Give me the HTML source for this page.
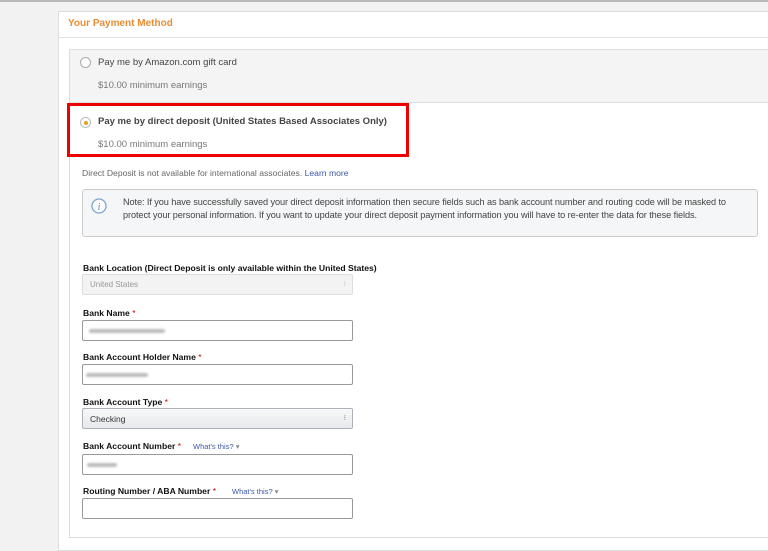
<!DOCTYPE html>
<html><head><style>
*{box-sizing:border-box;margin:0;padding:0}
body{width:768px;height:542px;background:#f2f2f2;font-family:"Liberation Sans",Arial,sans-serif;position:relative;overflow:hidden;color:#333}
.top{position:absolute;left:0;top:0;width:768px;height:2px;background:#bbb}
.panel{position:absolute;left:58px;top:11px;width:712px;height:540px;background:#fff;border:1px solid #ddd}
.hdr{position:absolute;left:68px;top:18px;font-size:10px;color:#e47911;font-weight:bold;opacity:.85}
.hline{position:absolute;left:58px;top:37px;width:710px;height:1px;background:#e3e3e3}
.inner{position:absolute;left:69px;top:49px;width:700px;height:489px;border:1px solid #ddd;background:#fff}
.gift{position:absolute;left:69px;top:49px;width:700px;height:54px;background:#f4f4f4;border:1px solid #ddd}
.radio{position:absolute;width:11px;height:11px;border-radius:50%;border:1px solid #aaa;background:#fff}
.t{position:absolute;white-space:nowrap}
.red{position:absolute;left:67px;top:103px;width:342px;height:54px;border:3px solid #ee0000}
.info{position:absolute;left:82px;top:189px;width:676px;height:48px;background:#f5f6f7;border:1px solid #ccc;border-radius:3px}
.lbl{position:absolute;left:83px;font-size:8.6px;font-weight:bold;color:#111;white-space:nowrap}
.lbl i{color:#c40000;font-style:normal;font-weight:normal}
.in{position:absolute;left:82px;width:271px;height:21px;border:1px solid #999;border-radius:2px;background:#fff}
.sel{background:linear-gradient(#f7f8fa,#e7e9ec);border-color:#adb1b8}
.w{position:absolute;font-size:7.5px;color:#3b58a8;font-weight:normal;white-space:nowrap}
.blur{position:absolute;height:4px;background:#bbb;border-radius:2px;filter:blur(1px)}
</style></head><body>
<div class="top"></div>
<div class="panel"></div>
<div class="hdr">Your Payment Method</div>
<div class="hline"></div>
<div class="inner"></div>
<div class="gift"></div>
<div class="radio" style="left:80px;top:57px"></div>
<div class="t" style="left:98px;top:57px;font-size:9.5px;color:#444">Pay me by Amazon.com gift card</div>
<div class="t" style="left:98px;top:80px;font-size:9.5px;color:#777">$10.00 minimum earnings</div>
<div class="radio" style="left:80px;top:117px;border-color:#bbb"><div style="position:absolute;left:3px;top:3px;width:4px;height:4px;border-radius:50%;background:#e4a11b"></div></div>
<div class="t" style="left:98px;top:116px;font-size:9.5px;font-weight:bold;color:#444">Pay me by direct deposit (United States Based Associates Only)</div>
<div class="t" style="left:98px;top:139px;font-size:9.5px;color:#777">$10.00 minimum earnings</div>
<div class="red"></div>
<div class="t" style="left:82px;top:168px;font-size:8.6px;color:#666">Direct Deposit is not available for international associates. <span style="color:#3b58a8">Learn more</span></div>
<div class="info">
<svg style="position:absolute;left:8px;top:8px" width="16" height="16" viewBox="0 0 16 16"><circle cx="8" cy="8" r="7" fill="#fff" stroke="#7ba3d0" stroke-width="1.3"/><text x="8" y="12" font-size="10" font-style="italic" font-family="Liberation Serif" fill="#5b87c0" text-anchor="middle">i</text></svg>
<div class="t" style="left:40px;top:6px;font-size:9.2px;line-height:13px;color:#444;letter-spacing:-0.1px">Note: If you have successfully saved your direct deposit information then secure fields such as bank account number and routing code will be masked to<br>protect your personal information. If you want to update your direct deposit payment information you will have to re-enter the data for these fields.</div>
</div>
<div class="lbl" style="top:263px">Bank Location (Direct Deposit is only available within the United States)</div>
<div class="in sel" style="top:274px;border-color:#ddd;background:#f3f3f3"><span class="t" style="left:7px;top:5px;font-size:8px;color:#999">United States</span><span class="t" style="right:6px;top:5px;font-size:7px;color:#aaa">⁝</span></div>
<div class="lbl" style="top:308px">Bank Name <i>*</i></div>
<div class="in" style="top:320px"><div class="blur" style="left:6px;top:8px;width:76px"></div></div>
<div class="lbl" style="top:352px">Bank Account Holder Name <i>*</i></div>
<div class="in" style="top:364px"><div class="blur" style="left:3px;top:8px;width:62px"></div></div>
<div class="lbl" style="top:397px">Bank Account Type <i>*</i></div>
<div class="in sel" style="top:408px"><span class="t" style="left:7px;top:5px;font-size:8.5px;color:#333">Checking</span><span class="t" style="right:6px;top:5px;font-size:7px;color:#555">⁝</span></div>
<div class="lbl" style="top:441px">Bank Account Number <i>*</i><span class="w" style="left:110px;top:1px">What's this? <span style="color:#888">▾</span></span></div>
<div class="in" style="top:454px"><div class="blur" style="left:4px;top:8px;width:30px"></div></div>
<div class="lbl" style="top:486px">Routing Number / ABA Number <i>*</i><span class="w" style="left:149px;top:1px">What's this? <span style="color:#888">▾</span></span></div>
<div class="in" style="top:498px"></div>
</body></html>
